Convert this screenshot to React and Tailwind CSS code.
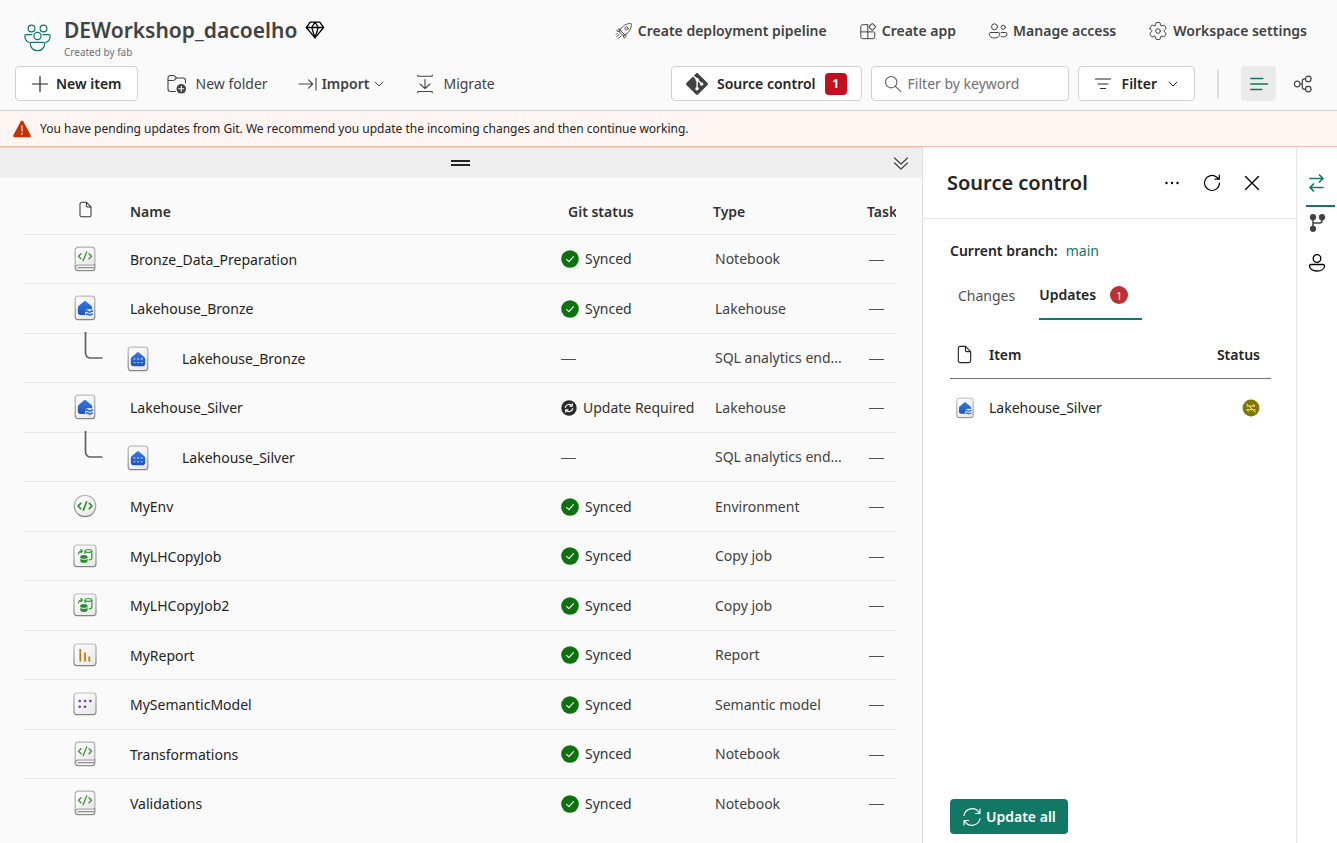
import React from "react";

const Svg = ({ size = 20, box = 20, className = "", sw = 1, children }) => (
  <svg
    width={size}
    height={size}
    viewBox={`0 0 ${box} ${box}`}
    fill="none"
    stroke="currentColor"
    strokeWidth={sw}
    strokeLinecap="round"
    strokeLinejoin="round"
    className={`shrink-0 ${className}`}
    aria-hidden="true"
  >
    {children}
  </svg>
);

const WorkspaceLogo = () => (
  <Svg size={28} box={28} sw={1.2} className="text-[#117865]">
    <circle cx="7.500" cy="4.500" r="3.400" />
    <circle cx="19.500" cy="4.500" r="3.400" />
    <circle cx="13.500" cy="12" r="3.600" />
    <path d="M8 10.700H2.200C1.300 10.700.8 11.300.8 12.100c0 3.400 2 5.600 4.600 6.400" />
    <path d="M19 10.700h5.800c.9 0 1.400.6 1.400 1.400 0 3.400-2 5.600-4.600 6.400" />
    <path d="M7.800 18.300h11.400c.9 0 1.400.6 1.400 1.400 0 4-3 7-7.100 7s-7.100-3-7.100-7c0-.8.5-1.400 1.400-1.400z" />
  </Svg>
);

const Diamond = () => (
  <Svg sw={1.3} className="text-black">
    <path d="M5.200 2.200h9.600l3.800 5.300L10 17.800 1.400 7.500z" />
    <path d="M1.400 7.500h17.200M6.700 7.500L10 17.800l3.300-10.300M6.700 7.500L10 2.200l3.300 5.300" />
  </Svg>
);

const Rocket = () => (
  <Svg size={18}>
    <path d="M6.200 8.200C8.500 4.300 12 1.700 17.300 1.700c.6 0 .9.3.9.900 0 5.300-2.500 8.800-6.300 11.100L11 14.300 5.500 8.900z" />
    <circle cx="12.800" cy="7.100" r="1.800" />
    <path d="M6.200 8.200L4.400 7.900c-.5 0-.9.1-1.200.5L1.900 9.900l3.600 1M11.900 13.700l.3 1.800c0 .5-.1.900-.5 1.200l-1.500 1.400-1.100-3.700M5.500 8.900l-1.100 1.600 5.100 5L11 14.300M4.700 13.400l-3 3M2.600 12.400l-1.300 1.300M6.700 15.400l-1.300 1.600M4.600 17.300l-1 1" />
  </Svg>
);

const AppGrid = () => (
  <Svg size={18} sw={1.100}>
    <path d="M9.500 3H4A2 2 0 0 0 2 5v11.500a2 2 0 0 0 2 2h11.500a2 2 0 0 0 2-2V12a1 1 0 0 0-1-1H2M9.800 18.500V3" />
    <rect x="12" y="2.600" width="5.600" height="5.600" rx=".8" transform="rotate(45 14.800 5.400)" />
  </Svg>
);

const People = () => (
  <Svg size={20}>
    <circle cx="6.500" cy="5.800" r="3" />
    <circle cx="15.200" cy="6.300" r="2.100" />
    <path d="M2.500 11.500h8c.8 0 1.300.5 1.300 1.300 0 2.500-2 4.200-5.300 4.200s-5.300-1.700-5.300-4.200c0-.8.5-1.300 1.300-1.300zM13.200 11.500h4.600c.7 0 1.200.5 1.200 1.200 0 2-1.400 3.200-3.800 3.200-.8 0-1.500-.1-2.100-.4" />
  </Svg>
);

const Gear = () => (
  <Svg>
    <path d="M1.910 7.380A8.500 8.500 0 0 1 3.700 4.300a.5.500 0 0 1 .54-.13l1.920.68a1 1 0 0 0 1.320-.76l.36-2a.5.500 0 0 1 .4-.4 8.530 8.530 0 0 1 3.550 0c.2.040.35.2.38.4l.37 2a1 1 0 0 0 1.320.76l1.920-.68a.5.500 0 0 1 .54.130 8.500 8.500 0 0 1 1.780 3.080c.06.2 0 .4-.15.540l-1.560 1.320a1 1 0 0 0 0 1.520l1.560 1.320a.5.500 0 0 1 .15.540 8.500 8.500 0 0 1-1.780 3.080.5.500 0 0 1-.54.130l-1.920-.68a1 1 0 0 0-1.320.76l-.37 2a.5.500 0 0 1-.38.4 8.530 8.530 0 0 1-3.560 0 .5.500 0 0 1-.39-.4l-.36-2a1 1 0 0 0-1.320-.76l-1.920.68a.5.500 0 0 1-.54-.13 8.500 8.500 0 0 1-1.780-3.080.5.500 0 0 1 .15-.54l1.560-1.320a1 1 0 0 0 0-1.520L2.060 7.920a.5.500 0 0 1-.15-.54Z" />
    <circle cx="10" cy="10" r="2.300" />
  </Svg>
);

const Plus = () => (
  <Svg size={18} sw={1.300}>
    <path d="M10 1.500v17M1.500 10h17" />
  </Svg>
);

const FolderAdd = () => (
  <Svg size={22} box={22} sw={1.100}>
    <path d="M9.500 18.500H4.500A2.500 2.500 0 0 1 2 16V5A2.500 2.500 0 0 1 4.500 2.500h2.700c.4 0 .8.2 1.100.4L10.500 5H17A2.500 2.500 0 0 1 19.500 7.500v2.500M2 7.500h5.200c.4 0 .8-.2 1.100-.4L10.500 5" />
    <circle cx="15.300" cy="15.800" r="4.800" fill="currentColor" stroke="none" />
    <path d="M15.300 13.300v5M12.800 15.800h5" stroke="#fafafa" />
  </Svg>
);

const ImportIcon = () => (
  <Svg sw={1.100}>
    <path d="M1 10h13.500M10.500 5.800L14.700 10l-4.200 4.200M18 4v12" />
  </Svg>
);

const MigrateIcon = () => (
  <Svg sw={1.100}>
    <path d="M2.700 1v.6c0 .4.300.7.700.7h13.200c.4 0 .7-.3.7-.7V1M2.700 18.800v-.6c0-.4.300-.7.700-.7h13.200c.4 0 .7.300.7.700v.6M10 5.500v9M5 10l5 4.700L15 10" />
  </Svg>
);

const ChevronDown = () => (
  <Svg size={12} box={12}>
    <path d="M2 4l4 4 4-4" />
  </Svg>
);

const GitLogo = () => (
  <svg width="22" height="22" viewBox="0 0 24 24" fill="#424242" className="shrink-0" aria-hidden="true">
    <path d="M23.546 10.930L13.067.452c-.604-.603-1.582-.603-2.188 0L8.708 2.627l2.760 2.760c.645-.215 1.379-.07 1.889.441.516.515.658 1.258.438 1.900l2.658 2.660c.645-.223 1.387-.078 1.900.435.721.720.721 1.884 0 2.604-.719.719-1.881.719-2.600 0-.539-.541-.674-1.337-.404-1.996L12.860 8.955v6.525c.176.086.342.203.488.348.713.721.713 1.883 0 2.600-.719.721-1.889.721-2.609 0-.719-.719-.719-1.879 0-2.598.182-.18.387-.316.605-.406V8.835c-.217-.091-.424-.222-.600-.401-.545-.545-.676-1.342-.396-2.009L7.636 3.700.450 10.881c-.600.605-.600 1.584 0 2.189l10.480 10.477c.604.604 1.582.604 2.186 0l10.430-10.430c.605-.603.605-1.582 0-2.187" />
  </svg>
);

const SearchIcon = () => (
  <Svg size={18} sw={1.200} className="text-[#616161]">
    <circle cx="8" cy="8" r="6.300" />
    <path d="M12.700 12.700l5.800 5.800" />
  </Svg>
);

const FilterIcon = () => (
  <Svg size={18} box={18} sw={1.200}>
    <path d="M1.500 4h15M4 9h10M6.500 13.500h5" />
  </Svg>
);

const ListIcon = () => (
  <Svg size={20} sw={1.500} className="text-[#117865]">
    <path d="M1.800 4.500h12M1.800 10h16.700M1.800 15.500h11" />
  </Svg>
);

const LineageIcon = () => (
  <Svg size={20} sw={1.200}>
    <circle cx="4.200" cy="10" r="2.800" />
    <circle cx="15.300" cy="4.900" r="2.800" />
    <circle cx="15.300" cy="15.100" r="2.800" />
    <path d="M7 10h2.300M12.500 4.900h-1c-1.400 0-2.200.9-2.200 2.200v5.800c0 1.300.8 2.200 2.200 2.200h1" />
  </Svg>
);

const Warning = () => (
  <svg width="20" height="18" viewBox="0 0 20 18" className="shrink-0" aria-hidden="true">
    <path d="M8.800 1.200c.5-.9 1.900-.9 2.400 0l7.500 14c.5.900-.2 2-1.200 2h-15c-1 0-1.700-1.100-1.200-2z" fill="#c4320a" />
    <path d="M10 6v5" stroke="#fbc9ae" strokeWidth="1.400" strokeLinecap="round" />
    <circle cx="10" cy="13.700" r="1" fill="#fbc9ae" />
  </svg>
);

const DoubleChevron = () => (
  <Svg size={18} box={18} sw={1.200} className="text-[#424242]">
    <path d="M2.500 4L9 10l6.500-6M2.500 9L9 15l6.500-6" />
  </Svg>
);

const DocIcon = ({ size = 18 }) => (
  <Svg size={size} sw={1.200}>
    <path d="M5.500 1.500h5.500L16.500 7v9.500a2 2 0 0 1-2 2h-9a2 2 0 0 1-2-2v-13a2 2 0 0 1 2-2zM11 1.500V5.500A1.500 1.500 0 0 0 12.500 7h4" />
  </Svg>
);

const Defs = () => (
  <svg width="0" height="0" className="absolute" aria-hidden="true">
    <defs>
      <linearGradient id="plate" x1="0" y1="0" x2="1" y2="1">
        <stop offset="0" stopColor="#ffffff" />
        <stop offset="1" stopColor="#e6e6e6" />
      </linearGradient>
      <linearGradient id="edge" x1="0" y1="0" x2="0" y2="1">
        <stop offset="0" stopColor="#bdbdbd" />
        <stop offset="1" stopColor="#858585" />
      </linearGradient>
      <linearGradient id="house" x1="0" y1="0" x2="0" y2="1">
        <stop offset="0" stopColor="#3576e0" />
        <stop offset="1" stopColor="#1b55bd" />
      </linearGradient>
    </defs>
  </svg>
);

const Tile = ({ w = 24, h = 26, className = "", children }) => (
  <svg width={w} height={h} viewBox="0 0 24 26" fill="none" className={`shrink-0 ${className}`} aria-hidden="true">
    {children}
  </svg>
);

const TallPlate = () => (
  <rect x="2.200" y="1.200" width="19.600" height="23.400" rx="2.800" fill="url(#plate)" stroke="url(#edge)" strokeWidth="1.200" />
);
const SquarePlate = () => (
  <rect x="1" y="2" width="22" height="21.600" rx="2.800" fill="url(#plate)" stroke="url(#edge)" strokeWidth="1.200" />
);

const NotebookIcon = () => (
  <Tile>
    <path d="M2.200 22V4A2.800 2.800 0 0 1 5 1.200h14A2.800 2.800 0 0 1 21.800 4v14H2.200" fill="url(#plate)" />
    <path d="M2.200 22V4A2.800 2.800 0 0 1 5 1.200h14A2.800 2.800 0 0 1 21.800 4v14.500" stroke="#b0b0b0" strokeWidth="1.200" />
    <path d="M21.800 18c0 .8-.7 1-1.500 1H5.200c-1.800 0-3 1-3 2.600 0 1.700 1.200 3 3 3h14c1.600 0 2.600-1 2.600-2.600z" fill="#f4f4f4" stroke="#8f8f8f" strokeWidth="1.200" />
    <path d="M5 21.700h16.500" stroke="#8f8f8f" strokeWidth="1.200" strokeLinecap="round" />
    <path d="M8 7.700L5.500 10.200 8 12.700M16 7.700l2.500 2.500-2.500 2.500M13.800 5.800l-3.600 8.800" stroke="#3c8f3c" strokeWidth="1.300" strokeLinecap="round" />
  </Tile>
);

const LakehouseIcon = ({ w, h }) => (
  <Tile w={w} h={h}>
    <TallPlate />
    <path d="M11.200 6.300c.5-.4 1.100-.4 1.600 0l5.400 4.500c.7.600 1 1.400 1 2.300v1.400c-2.300-1.200-6.800-.6-7 1.800-.1 1.200.2 2.300-.2 3.700H7.200c-1.300 0-2.400-1-2.400-2.400v-4.500c0-.9.4-1.700 1-2.300z" fill="url(#house)" />
    <path d="M12.500 16.500c1-.9 1.800-.9 2.700 0s1.700.9 2.600 0c.6-.6 1.200-.7 1.700-.3M13.300 19.500c1-.9 1.500-.9 2.300 0s1.500.9 2.300 0c.5-.5 1-.6 1.500-.3" stroke="#2a68d4" strokeWidth="1.500" strokeLinecap="round" />
  </Tile>
);

const SqlIcon = () => (
  <Tile>
    <TallPlate />
    <path d="M11.200 6.500c.5-.4 1.100-.4 1.600 0l5.400 4.500c.7.600 1 1.400 1 2.300v4.500c0 1.400-1.100 2.400-2.400 2.400H7.200c-1.300 0-2.400-1-2.400-2.400v-4.500c0-.9.400-1.700 1-2.300z" fill="url(#house)" />
    <path
      d="M7.600 12.300h1.700v1.400H7.600zM11.200 12.300h1.700v1.400h-1.700zM14.800 12.300h1.700v1.400h-1.700zM7.600 15.900h1.700v1.400H7.600zM11.200 15.900h1.700v1.400h-1.700zM14.800 15.900h1.700v1.400h-1.700z"
      fill="#a9c6f5"
    />
  </Tile>
);

const EnvironmentIcon = () => (
  <Tile>
    <circle cx="12" cy="13" r="10.700" fill="url(#plate)" stroke="url(#edge)" strokeWidth="1.200" />
    <path d="M7.700 10.300L5 13l2.700 2.700M16.300 10.300L19 13l-2.700 2.700M13.600 8.800l-3.200 8.400" stroke="#2f8f2f" strokeWidth="1.700" strokeLinecap="round" strokeLinejoin="round" />
  </Tile>
);

const CopyJobIcon = () => (
  <Tile>
    <SquarePlate />
    <path d="M5.500 11.500c0-2.200 1-3.400 3.200-3.400M7.500 6.200l1.900 1.900L7.500 10" stroke="#3c9a3c" strokeWidth="1.300" />
    <path d="M12 8v3M18.800 8v7.500c0 .8-1.200 1.300-3 1.400" stroke="#3c9a3c" strokeWidth="1.300" />
    <ellipse cx="15.400" cy="7.900" rx="3.400" ry="1.400" stroke="#3c9a3c" strokeWidth="1.200" />
    <path d="M7.300 14v4.300c0 .9 1.500 1.700 3.600 1.700s3.600-.8 3.600-1.700V14z" fill="#2f8b35" />
    <ellipse cx="10.900" cy="13.600" rx="3.600" ry="1.600" fill="#2f8b35" />
    <path d="M7.300 15.400c1.200 1.300 6 1.300 7.200 0" stroke="#e9f5e9" strokeWidth="1" />
  </Tile>
);

const ReportIcon = () => (
  <Tile>
    <SquarePlate />
    <path d="M7.300 7v12.500M12 10.500v9M16.300 14.500v5" stroke="#bf7d12" strokeWidth="1.800" />
  </Tile>
);

const ModelIcon = () => (
  <Tile>
    <SquarePlate />
    <g fill="#6a3fb5">
      <circle cx="6.700" cy="10" r="1.300" />
      <circle cx="12" cy="10" r="1.300" />
      <circle cx="17.300" cy="10" r="1.300" />
      <circle cx="6.700" cy="15.800" r="1.300" />
      <circle cx="12" cy="15.800" r="1.300" />
    </g>
  </Tile>
);

const Branch = () => (
  <svg width="20" height="28" viewBox="0 0 20 28" fill="none" className="absolute -top-0.5 left-[60px]" aria-hidden="true">
    <path d="M1.500 0v21a5 5 0 0 0 5 5H18.500" stroke="#616161" strokeWidth="1.700" />
  </svg>
);

const SyncedIcon = () => (
  <svg width="18" height="18" viewBox="0 0 18 18" fill="none" className="shrink-0" aria-hidden="true">
    <circle cx="9" cy="9" r="8.800" fill="#0e700e" />
    <path d="M5.500 9.300l2.400 2.300 4.600-4.900" stroke="#fff" strokeWidth="1.100" strokeLinecap="round" strokeLinejoin="round" />
  </svg>
);

const UpdateIcon = () => (
  <svg width="16" height="16" viewBox="0 0 16 16" fill="none" className="shrink-0" aria-hidden="true">
    <circle cx="8" cy="8" r="7.700" fill="#2b2b2b" />
    <path d="M4.300 7.400a3.800 3.800 0 0 1 6.700-1.600M11.700 8.600A3.800 3.800 0 0 1 5 10.200M11.300 3.900v2.200H9M4.700 12.100V9.900H7" stroke="#fff" strokeWidth="1.200" strokeLinecap="round" strokeLinejoin="round" />
  </svg>
);

const ConflictIcon = () => (
  <svg width="18" height="18" viewBox="0 0 18 18" fill="none" className="shrink-0" aria-hidden="true">
    <circle cx="9" cy="9" r="8.400" fill="#847500" />
    <path d="M4.800 5l8.400 8M8.500 7H13L11.500 5.700M9.500 10.800H4.800l1.400 1.300M4.800 7h1.200M12 10.800h1.200" stroke="#f5f0cf" strokeWidth="1" strokeLinecap="round" />
  </svg>
);

const RefreshIcon = () => (
  <Svg sw={1.200}>
    <path d="M17.500 10A7.500 7.500 0 1 1 14.800 4.200M17.300 2v4.200h-4.200M15 4.300l2.200 1.900" />
  </Svg>
);

const CloseIcon = () => (
  <Svg sw={1.400}>
    <path d="M3.500 3.500l13 13M16.500 3.500l-13 13" />
  </Svg>
);

const MoreIcon = () => (
  <svg width="20" height="20" viewBox="0 0 20 20" fill="currentColor" aria-hidden="true">
    <circle cx="4.500" cy="10" r="1.200" />
    <circle cx="10" cy="10" r="1.200" />
    <circle cx="15.500" cy="10" r="1.200" />
  </svg>
);

const SwapIcon = () => (
  <Svg size={20} sw={1.700} className="text-[#117865]">
    <path d="M4 5.500h13M13.500 2L17 5.500 13.500 9M17 14.500H4M7.500 11L4 14.500 7.500 18" />
  </Svg>
);

const BranchIcon = () => (
  <Svg size={20} sw={1.500} className="text-[#424242]">
    <g fill="currentColor" stroke="none">
      <circle cx="6" cy="4.200" r="3.100" />
      <circle cx="15" cy="4.200" r="3.100" />
      <circle cx="6" cy="15.800" r="3.100" />
    </g>
    <path d="M6 5v10M15 5v2.500a2.500 2.500 0 0 1-2.500 2.500H6" />
  </Svg>
);

const PersonIcon = () => (
  <Svg size={20} sw={1.300}>
    <circle cx="10" cy="5.500" r="3.800" />
    <path d="M4 11.500h12c.9 0 1.500.6 1.500 1.400 0 3-3 5.100-7.500 5.100s-7.500-2.100-7.500-5.100c0-.8.6-1.400 1.500-1.400z" />
  </Svg>
);

const SyncIcon = () => (
  <Svg size={20} sw={1.200}>
    <path d="M2 8.500A8.200 8.200 0 0 1 17.300 6M18 11.500A8.200 8.200 0 0 1 2.700 14M18 2v4.500h-4.500M2 18v-4.500h4.500" />
  </Svg>
);

const icons = {
  Notebook: NotebookIcon,
  Lakehouse: LakehouseIcon,
  Environment: EnvironmentIcon,
  "Copy job": CopyJobIcon,
  Report: ReportIcon,
  "Semantic model": ModelIcon,
};

const rows = [
  { name: "Bronze_Data_Preparation", type: "Notebook", status: "Synced" },
  { name: "Lakehouse_Bronze", type: "Lakehouse", status: "Synced" },
  { name: "Lakehouse_Bronze", type: "SQL analytics end...", child: true },
  { name: "Lakehouse_Silver", type: "Lakehouse", status: "Update Required" },
  { name: "Lakehouse_Silver", type: "SQL analytics end...", child: true },
  { name: "MyEnv", type: "Environment", status: "Synced" },
  { name: "MyLHCopyJob", type: "Copy job", status: "Synced" },
  { name: "MyLHCopyJob2", type: "Copy job", status: "Synced" },
  { name: "MyReport", type: "Report", status: "Synced" },
  { name: "MySemanticModel", type: "Semantic model", status: "Synced" },
  { name: "Transformations", type: "Notebook", status: "Synced" },
  { name: "Validations", type: "Notebook", status: "Synced" },
];

const Dash = () => <span className="mt-0.5 block h-px w-[15px] bg-[#505050]" />;

function ItemRow({ row }) {
  const Icon = icons[row.type];
  return (
    <tr className="h-[49px] border-b border-[#e6e6e6] last:border-b-0 even:h-[50px]">
      <td className="relative pl-[49px]">{row.child ? <Branch /> : <Icon />}</td>
      <td className="pt-0.5 text-[#242424]">
        {row.child ? (
          <span className="flex items-center gap-8">
            <span className="-ml-1">
              <SqlIcon />
            </span>
            {row.name}
          </span>
        ) : (
          row.name
        )}
      </td>
      <td className="pt-px text-[#333333]">
        {row.status ? (
          <span className="flex items-center gap-1.5">
            {row.status === "Synced" ? <SyncedIcon /> : <UpdateIcon />}
            {row.status}
          </span>
        ) : (
          <Dash />
        )}
      </td>
      <td className="pl-0.5 pt-px text-[#424242]">{row.type}</td>
      <td className="pl-0.5 pt-px">
        <Dash />
      </td>
    </tr>
  );
}

const TopAction = ({ icon, children }) => (
  <button type="button" className="flex items-center gap-[5px]">
    {icon}
    {children}
  </button>
);

const outlined = "flex h-[35px] items-center rounded border border-[#d1d1d1] bg-white font-semibold text-[#242424]";

export default function App() {
  return (
    <div className="flex min-h-screen flex-col whitespace-nowrap bg-[#fafafa] font-['Noto_Sans','Open_Sans',sans-serif] text-[14px] leading-5 text-[#242424]">
      <Defs />
      <header className="border-b border-[#d1d1d1] pb-[9px] text-[#424242]">
        <div className="flex h-[66px] items-start justify-between pl-6 pr-[30px]">
          <div className="flex gap-3 pt-4">
            <div className="pt-2">
              <WorkspaceLogo />
            </div>
            <div>
              <h1 className="flex items-center gap-2 text-[21px] font-semibold leading-7">
                DEWorkshop_dacoelho
                <Diamond />
              </h1>
              <p className="text-[10px] leading-4 text-[#707070]">Created by fab</p>
            </div>
          </div>
          <nav className="flex gap-8 pt-[21px] font-semibold">
            <TopAction icon={<Rocket />}>Create deployment pipeline</TopAction>
            <TopAction icon={<AppGrid />}>Create app</TopAction>
            <TopAction icon={<People />}>Manage access</TopAction>
            <TopAction icon={<Gear />}>Workspace settings</TopAction>
          </nav>
        </div>
        <div className="flex items-center justify-between pl-[15px] pr-6">
          <div className="flex items-center">
            <button type="button" className={`${outlined} gap-[7px] px-[15px]`}>
              <Plus />
              New item
            </button>
            <button type="button" className="ml-7 flex items-center gap-2">
              <FolderAdd />
              New folder
            </button>
            <button type="button" className="ml-[30px] flex items-center gap-1 font-semibold">
              <ImportIcon />
              Import
              <ChevronDown />
            </button>
            <button type="button" className="ml-[30px] flex items-center gap-2">
              <MigrateIcon />
              Migrate
            </button>
          </div>
          <div className="flex items-center gap-[9px]">
            <button type="button" className={`${outlined} gap-[9px] px-[14px]`}>
              <GitLogo />
              Source control
              <span className="grid size-[22px] place-items-center rounded bg-[#c50f1f] text-xs font-bold text-white">1</span>
            </button>
            <label className="flex h-[35px] w-[198px] items-center gap-1.5 rounded border border-[#d1d1d1] bg-white px-3">
              <SearchIcon />
              <input
                type="text"
                aria-label="Filter by keyword"
                placeholder="Filter by keyword"
                className="min-w-0 flex-1 bg-transparent outline-none placeholder:text-[#707070]"
              />
            </label>
            <button type="button" className={`${outlined} gap-2.5 px-[15px]`}>
              <FilterIcon />
              Filter
              <ChevronDown />
            </button>
            <div className="mx-[13px] h-7 w-0.5 bg-[#dcdcdc]" />
            <div className="flex items-center gap-[17px]">
              <button type="button" aria-label="List view" className="grid size-[35px] place-items-center rounded bg-[#ebebeb]">
                <ListIcon />
              </button>
              <button type="button" aria-label="Lineage view">
                <LineageIcon />
              </button>
            </div>
          </div>
        </div>
      </header>

      <div role="alert" className="flex h-9 items-center gap-2 border-b border-[#f4bfab] bg-[#fff5f2] px-3 text-[12px]">
        <Warning />
        You have pending updates from Git. We recommend you update the incoming changes and then continue working.
      </div>

      <div className="flex flex-1">
        <main className="min-w-0 flex-1">
          <div className="flex h-[31px] items-center border-t border-[#d9d9d9] bg-[#efefef] pr-3">
            <div className="flex flex-1 justify-center pl-7">
              <div className="h-[6px] w-[19px] border-y-2 border-[#242424]" />
            </div>
            <button type="button" aria-label="Collapse">
              <DoubleChevron />
            </button>
          </div>
          <div className="pl-6 pr-[26px]">
            <table className="w-full table-fixed border-collapse text-left">
              <colgroup>
                <col className="w-[106px]" />
                <col />
                <col className="w-[152px]" />
                <col className="w-[154px]" />
                <col className="w-[29px]" />
              </colgroup>
              <thead>
                <tr className="h-14 border-b border-[#e6e6e6] text-[#333333]">
                  <th className="pl-[53px] pt-2" aria-label="Kind">
                    <DocIcon size={17} />
                  </th>
                  <th className="pt-3 font-semibold">Name</th>
                  <th className="pl-[7px] pt-3 font-semibold">Git status</th>
                  <th className="pt-3 font-semibold">Type</th>
                  <th className="overflow-hidden pt-3 font-semibold">Task</th>
                </tr>
              </thead>
              <tbody>
                {rows.map((row, i) => (
                  <ItemRow key={i} row={row} />
                ))}
              </tbody>
            </table>
          </div>
        </main>

        <aside className="flex w-[374px] flex-col border-l border-[#e0e0e0] bg-white">
          <div className="flex h-[72px] items-center justify-between border-b border-[#e6e6e6] pl-6 pr-[34px]">
            <h2 className="text-[20px] font-semibold leading-7">Source control</h2>
            <div className="flex gap-5 text-black">
              <button type="button" aria-label="More options">
                <MoreIcon />
              </button>
              <button type="button" aria-label="Refresh">
                <RefreshIcon />
              </button>
              <button type="button" aria-label="Close">
                <CloseIcon />
              </button>
            </div>
          </div>
          <div className="flex flex-1 flex-col pb-[9px] pl-[27px] pr-[25px] pt-[22px]">
            <p className="flex gap-2">
              <span className="font-semibold">Current branch:</span>
              <a href="#main" className="text-[#117865]">
                main
              </a>
            </p>
            <div role="tablist" className="mt-[11px] flex h-12 gap-6 pl-2">
              <button type="button" role="tab" aria-selected="false" className="text-[#505050]">
                Changes
              </button>
              <button type="button" role="tab" aria-selected="true" className="flex items-center gap-[14px] border-b-2 border-[#117865] pr-[14px] font-semibold">
                Updates
                <span className="grid size-[18px] place-items-center rounded-full bg-[#bc2f32] text-[11px] font-normal text-white">1</span>
              </button>
            </div>
            <table className="mt-3 w-full border-collapse text-left">
              <thead>
                <tr className="h-[46px] border-b border-[#707070]">
                  <th className="w-[39px] pl-[5px]" aria-label="Kind">
                    <DocIcon size={19} />
                  </th>
                  <th className="font-semibold">Item</th>
                  <th className="pr-[11px] text-right font-semibold">Status</th>
                </tr>
              </thead>
              <tbody>
                <tr className="h-[60px]">
                  <td className="pl-[5px]">
                    <LakehouseIcon w={20} h={22} />
                  </td>
                  <td>Lakehouse_Silver</td>
                  <td>
                    <div className="flex justify-end pr-[11px]">
                      <ConflictIcon />
                    </div>
                  </td>
                </tr>
              </tbody>
            </table>
            <button type="button" className="mt-auto flex h-[35px] items-center gap-1 self-start rounded bg-[#117865] px-3 font-semibold text-white">
              <SyncIcon />
              Update all
            </button>
          </div>
        </aside>

        <nav aria-label="Panel sections" className="flex w-[41px] flex-col items-center border-l border-[#e6e6e6] bg-white text-black">
          <button type="button" aria-label="Changes" className="ml-[6px] flex h-[60px] w-[29px] items-end border-b-2 border-[#117865] pb-3">
            <SwapIcon />
          </button>
          <button type="button" aria-label="Branches" className="mt-[6px]">
            <BranchIcon />
          </button>
          <button type="button" aria-label="Account" className="mt-5">
            <PersonIcon />
          </button>
        </nav>
      </div>
    </div>
  );
}
